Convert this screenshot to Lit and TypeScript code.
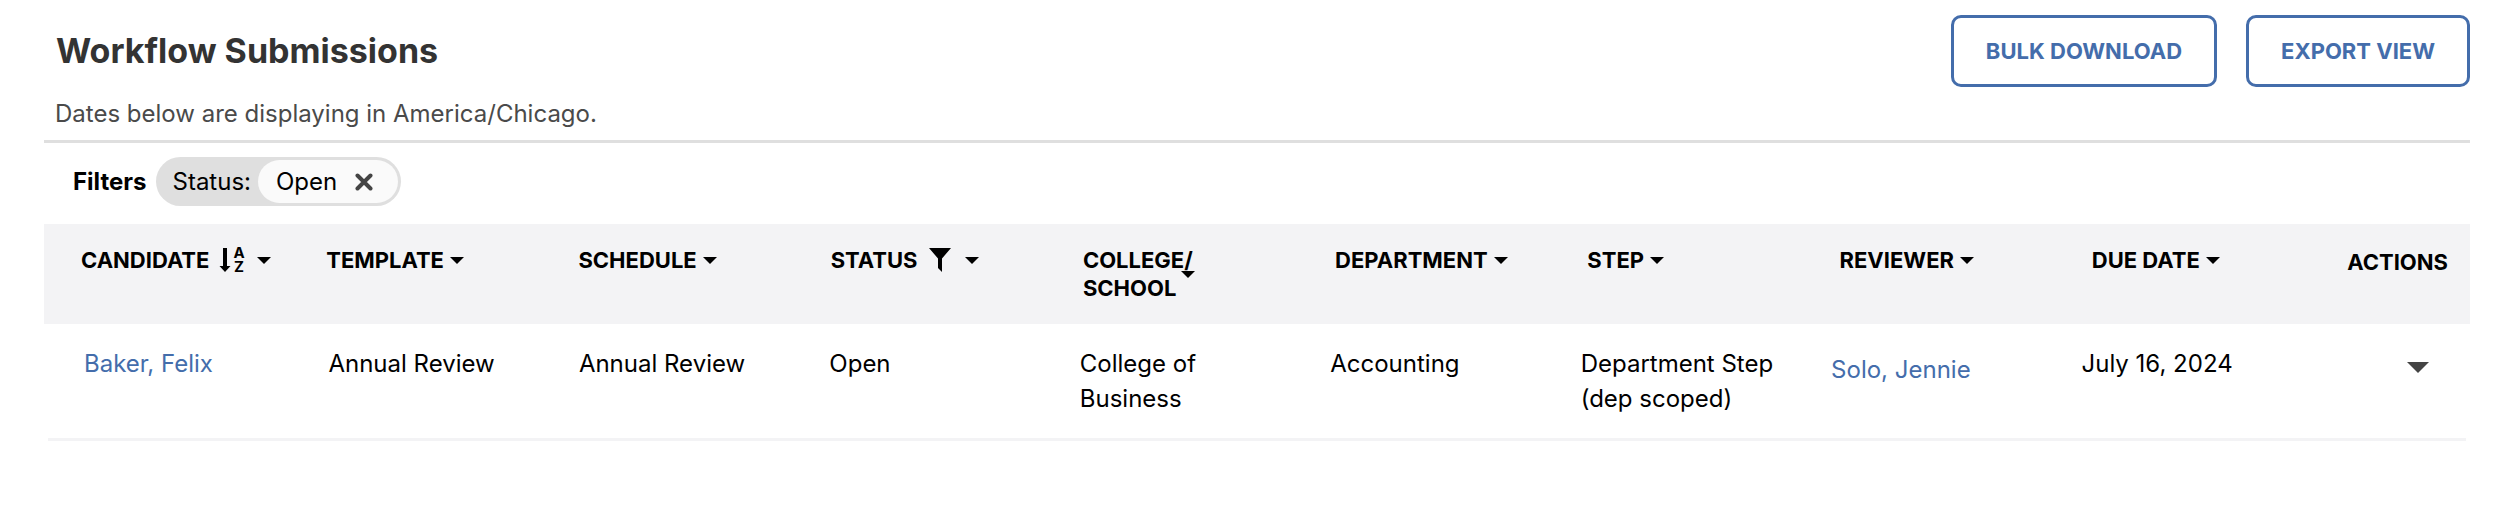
import { LitElement, html, css, svg, nothing } from "lit";
import { customElement, state } from "lit/decorators.js";

interface Column {
  key: string;
  lines: string[];
  icon?: "sort" | "filter";
}

const COLUMNS: Column[] = [
  { key: "candidate", lines: ["CANDIDATE"], icon: "sort" },
  { key: "template", lines: ["TEMPLATE"] },
  { key: "schedule", lines: ["SCHEDULE"] },
  { key: "status", lines: ["STATUS"], icon: "filter" },
  { key: "college", lines: ["COLLEGE/", "SCHOOL"] },
  { key: "department", lines: ["DEPARTMENT"] },
  { key: "step", lines: ["STEP"] },
  { key: "reviewer", lines: ["REVIEWER"] },
  { key: "due", lines: ["DUE DATE"] },
];

const ROWS = [
  {
    candidate: "Baker, Felix",
    template: "Annual Review",
    schedule: "Annual Review",
    status: "Open",
    college: "College of Business",
    department: "Accounting",
    step: "Department Step (dep scoped)",
    reviewer: "Solo, Jennie",
    due: "July 16, 2024",
  },
];

const caret = html`<svg class="caret" viewBox="0 0 14 7" aria-hidden="true">
  <path d="M0 0H14L7 7Z" fill="currentColor" />
</svg>`;

const sortIcon = html`<svg class="icon" viewBox="0 0 24 24" aria-hidden="true">
  <path d="M3 0H7V18H10.500L5 24L-0.500 18H3Z" fill="currentColor" />
  ${svg`<text class="az" x="19" y="10" text-anchor="middle">A</text>
  <text class="az" x="19" y="24" text-anchor="middle">Z</text>`}
</svg>`;

const filterIcon = html`<svg class="icon" viewBox="0 0 24 24" aria-hidden="true">
  <path d="M1 0H23L14 10.500V24L10 20V10.500Z" fill="currentColor" />
</svg>`;

@customElement("app-root")
export class AppRoot extends LitElement {
  @state() private statusFilter: string | null = "Open";

  static styles = css`
    :host {
      display: block;
      padding: 15px 48px 0 44px;
      font-family: Inter, "Liberation Sans", sans-serif;
      font-size: 24px;
      line-height: 35px;
      color: #000;
      background: #fff;
    }
    * {
      box-sizing: border-box;
    }
    button {
      font: inherit;
      color: inherit;
      background: none;
      border: 0;
      padding: 0;
      cursor: pointer;
    }
    a {
      color: #446dab;
      text-decoration: none;
    }
    .top {
      display: flex;
      justify-content: space-between;
      align-items: flex-start;
      padding-left: 12px;
      height: 72px;
    }
    h1 {
      margin: 0;
      padding-top: 14px;
      font-size: 34px;
      line-height: 44px;
      font-weight: 700;
      color: #333;
    }
    .buttons {
      display: flex;
      gap: 29px;
    }
    .outline {
      height: 72px;
      padding: 0 32px;
      border: 3px solid #446dab;
      border-radius: 10px;
      color: #446dab;
      font-size: 22px;
      font-weight: 700;
      white-space: nowrap;
    }
    .note {
      margin: 0;
      padding: 9px 0 9px 11px;
      color: #4a4a4a;
      border-bottom: 3px solid #dfdfdf;
    }
    .filters {
      display: flex;
      align-items: center;
      gap: 9px;
      padding: 14px 0 18px 29px;
    }
    .filters h2 {
      margin: 0;
      font-size: 24px;
      font-weight: 700;
    }
    .pill {
      display: flex;
      align-items: center;
      gap: 7px;
      height: 49px;
      padding: 3px 3px 3px 17px;
      border-radius: 25px;
      background: #dfdfdf;
    }
    .value {
      display: flex;
      align-items: center;
      gap: 18px;
      height: 43px;
      padding: 0 25px 0 18px;
      border-radius: 22px;
      background: #fafafa;
    }
    .remove {
      display: flex;
    }
    .remove svg {
      width: 18px;
      height: 18px;
      color: #444;
    }
    table,
    thead,
    tbody {
      display: block;
    }
    tr {
      display: grid;
    }
    .head {
      grid-template-columns: repeat(9, minmax(0, 1fr)) 126px;
      min-height: 100px;
      padding: 22px 0 0 30px;
      background: #f3f3f5;
    }
    th {
      padding: 0;
      font-size: 22px;
      line-height: 28px;
      font-weight: 700;
      text-align: left;
    }
    .head th:first-child {
      padding-left: 7px;
    }
    .sort {
      display: inline-flex;
      align-items: center;
      gap: 6px;
      text-align: left;
      white-space: nowrap;
    }
    .stacked {
      width: 92px;
    }
    .caret {
      flex: none;
      width: 14px;
      height: 7px;
    }
    .icon {
      flex: none;
      width: 24px;
      height: 24px;
      margin: 0 7px 0 5px;
      overflow: visible;
    }
    .az {
      font-size: 15px;
      font-weight: 700;
    }
    .head .actions {
      padding: 2px 22px 0 0;
      text-align: right;
    }
    .row {
      grid-template-columns: repeat(9, minmax(0, 1fr)) 134px;
      margin: 0 4px;
      padding: 22px 0 22px 30px;
      border-bottom: 3px solid #f3f3f5;
    }
    td {
      padding: 0 48px 0 0;
    }
    .row td:first-child {
      padding-left: 6px;
    }
    .row .reviewer {
      padding-top: 6px;
    }
    .row .actions {
      display: flex;
      justify-content: flex-end;
      align-items: flex-start;
      padding: 16px 37px 0 0;
    }
    .menu {
      display: flex;
      color: #444;
    }
    .menu .caret {
      width: 22px;
      height: 11px;
    }
  `;

  private header(c: Column) {
    const icon = c.icon === "sort" ? sortIcon : c.icon === "filter" ? filterIcon : nothing;
    const stacked = c.lines.length > 1;
    return html`<th scope="col">
      <button class="sort" type="button">
        <span class=${stacked ? "stacked" : "label"}
          >${c.lines.map((l, i) => (i ? html`<br />${l}` : l))}</span
        >${icon}${caret}
      </button>
    </th>`;
  }

  render() {
    return html`
      <header class="top">
        <h1>Workflow Submissions</h1>
        <div class="buttons">
          <button class="outline" type="button">BULK DOWNLOAD</button>
          <button class="outline" type="button">EXPORT VIEW</button>
        </div>
      </header>
      <p class="note">Dates below are displaying in America/Chicago.</p>
      <section class="filters">
        <h2>Filters</h2>
        ${this.statusFilter
          ? html`<div class="pill">
              <span>Status:</span>
              <span class="value">
                <span>${this.statusFilter}</span>
                <button
                  class="remove"
                  type="button"
                  aria-label="Remove status filter"
                  @click=${() => (this.statusFilter = null)}
                >
                  <svg viewBox="0 0 18 18" aria-hidden="true">
                    <path
                      d="M2.500 2.500L15.500 15.500M15.500 2.500L2.500 15.500"
                      stroke="currentColor"
                      stroke-width="4"
                      stroke-linecap="round"
                    />
                  </svg>
                </button>
              </span>
            </div>`
          : nothing}
      </section>
      <table>
        <thead>
          <tr class="head">
            ${COLUMNS.map((c) => this.header(c))}
            <th class="actions" scope="col">ACTIONS</th>
          </tr>
        </thead>
        <tbody>
          ${ROWS.map(
            (r) => html`<tr class="row">
              <td><a href="#candidate">${r.candidate}</a></td>
              <td>${r.template}</td>
              <td>${r.schedule}</td>
              <td>${r.status}</td>
              <td>${r.college}</td>
              <td>${r.department}</td>
              <td>${r.step}</td>
              <td class="reviewer"><a href="#reviewer">${r.reviewer}</a></td>
              <td>${r.due}</td>
              <td class="actions">
                <button class="menu" type="button" aria-label="Row actions">${caret}</button>
              </td>
            </tr>`
          )}
        </tbody>
      </table>
    `;
  }
}
